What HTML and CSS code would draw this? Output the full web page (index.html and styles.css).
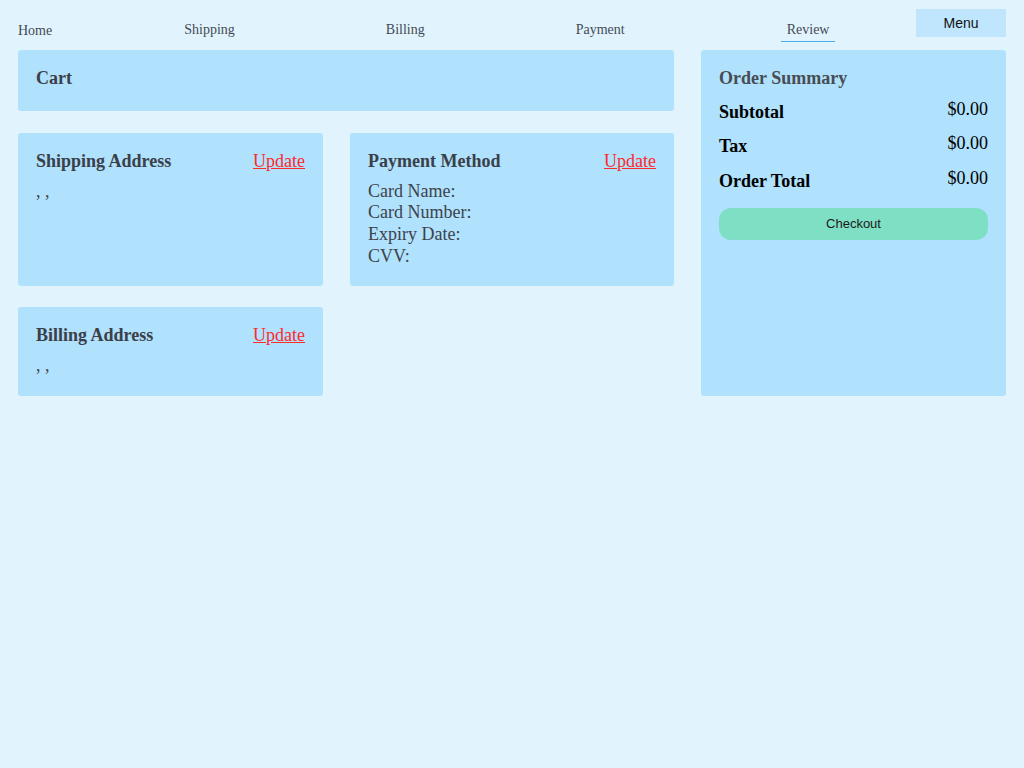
FILE: index.html
```html
<!DOCTYPE html>
<html lang="en">
<head>
<meta charset="utf-8">
<title>Review</title>
<link rel="stylesheet" href="styles.css">
</head>
<body>
<header class="topbar">
  <a class="home" href="#">Home</a>
  <nav class="steps">
    <a class="step" href="#">Shipping</a>
    <a class="step" href="#">Billing</a>
    <a class="step" href="#">Payment</a>
    <a class="step active" href="#">Review</a>
  </nav>
  <button class="menu-btn">Menu</button>
</header>
<main class="layout">
  <section class="card cart">
    <h2 class="card-title">Cart</h2>
  </section>
  <aside class="card summary">
    <h2 class="card-title summary-title">Order Summary</h2>
    <div class="sum-rows">
      <div class="sum-row"><span class="sum-label">Subtotal</span><span class="sum-value">$0.00</span></div>
      <div class="sum-row"><span class="sum-label">Tax</span><span class="sum-value">$0.00</span></div>
      <div class="sum-row"><span class="sum-label">Order Total</span><span class="sum-value">$0.00</span></div>
    </div>
    <button class="checkout">Checkout</button>
  </aside>
  <section class="card shipping">
    <div class="card-head"><h2 class="card-title">Shipping Address</h2><a class="update" href="#">Update</a></div>
    <p class="card-text">, ,</p>
  </section>
  <section class="card payment">
    <div class="card-head"><h2 class="card-title">Payment Method</h2><a class="update" href="#">Update</a></div>
    <p class="card-text">Card Name:</p>
    <p class="card-text">Card Number:</p>
    <p class="card-text">Expiry Date:</p>
    <p class="card-text">CVV:</p>
  </section>
  <section class="card billing">
    <div class="card-head"><h2 class="card-title">Billing Address</h2><a class="update" href="#">Update</a></div>
    <p class="card-text">, ,</p>
  </section>
</main>
</body>
</html>
```
FILE: styles.css
```css
* { box-sizing: border-box; }
html, body { margin: 0; padding: 0; }
body {
  background: #e1f4fe;
  font-family: "Liberation Serif", "Times New Roman", serif;
  color: #3d434c;
  min-height: 768px;
}
.topbar {
  display: flex;
  align-items: flex-start;
  padding: 9px 18px 0 18px;
  height: 50px;
}
.home {
  font-size: 14px;
  color: #444a52;
  text-decoration: none;
  margin-top: 13px;
  line-height: 17px;
}
.steps {
  flex: 1;
  display: flex;
  gap: 139px;
  margin-left: 126px;
}
.step {
  font-size: 14px;
  color: #444a52;
  text-decoration: none;
  line-height: 17px;
  margin-top: 12px;
  padding: 0 6px 3px;
  border-bottom: 1px solid transparent;
}
.step.active {
  border-bottom-color: #4aaee9;
  margin-left: 11px;
}
.menu-btn {
  width: 90px;
  height: 28px;
  border: none;
  background: #bfe6fd;
  font-family: "Liberation Sans", Arial, sans-serif;
  font-size: 14px;
  color: #111;
  padding: 0;
}
.layout {
  display: grid;
  grid-template-columns: 305px 324px 305px;
  grid-template-rows: 61px 153px 89px;
  column-gap: 27px;
  row-gap: 21.5px;
  padding: 0 18px;
}
.card {
  background: #b0e1fd;
  border-radius: 3px;
  padding: 18px;
}
.cart { grid-column: 1 / 3; grid-row: 1; }
.summary { grid-column: 3; grid-row: 1 / 4; }
.shipping { grid-column: 1; grid-row: 2; }
.payment { grid-column: 2; grid-row: 2; }
.billing { grid-column: 1; grid-row: 3; }
.card-title {
  margin: 0;
  font-size: 18px;
  font-weight: bold;
  line-height: 21px;
  color: #3a4049;
}
.summary-title { color: #474c55; }
.card-head {
  display: flex;
  justify-content: space-between;
  align-items: baseline;
  margin-bottom: 9px;
}
.update {
  font-size: 18px;
  line-height: 21px;
  color: #ff2a2a;
  text-decoration: underline;
}
.card-text {
  margin: 0;
  font-size: 18px;
  line-height: 21.7px;
  color: #3d434c;
}
.sum-rows { margin-top: 9.5px; }
.sum-row {
  display: flex;
  justify-content: space-between;
  align-items: flex-start;
  height: 34.5px;
}
.sum-label {
  font-size: 18px;
  font-weight: bold;
  line-height: 21px;
  color: #000;
  margin-top: 3px;
}
.sum-value {
  font-size: 18px;
  line-height: 21px;
  color: #000;
}
.checkout {
  display: block;
  width: 100%;
  height: 32px;
  margin-top: 6px;
  border: none;
  border-radius: 12px;
  background: #7fdfc4;
  font-family: "Liberation Sans", Arial, sans-serif;
  font-size: 13px;
  color: #1b1b1b;
  padding: 0 0 1px;
}
```
